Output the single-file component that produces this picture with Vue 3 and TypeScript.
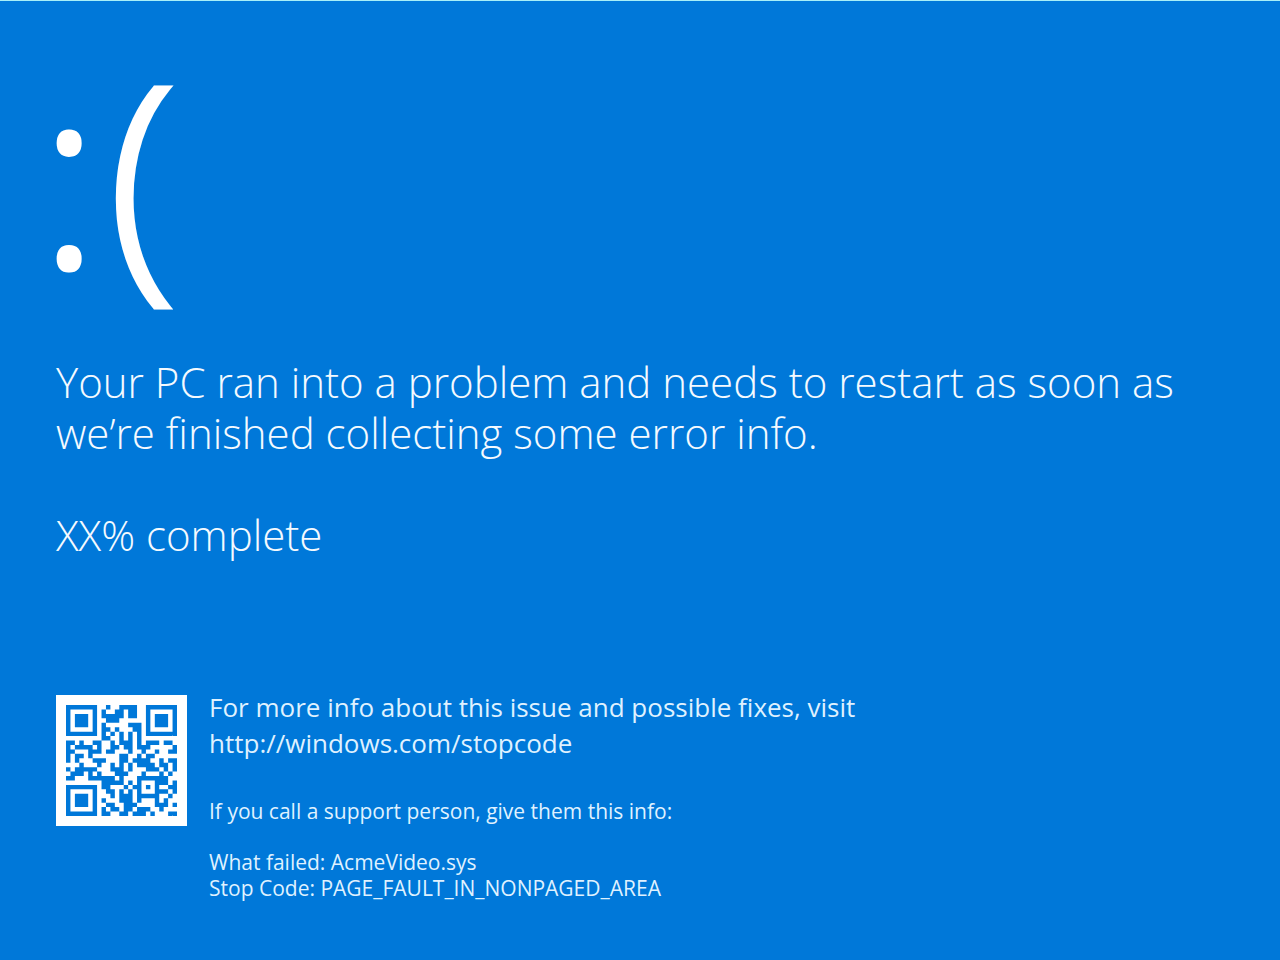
<script setup lang="ts">
const helpUrl = 'http://windows.com/stopcode'
const progress = 'XX'
const failure = {
  module: 'AcmeVideo.sys',
  stopCode: 'PAGE_FAULT_IN_NONPAGED_AREA',
}

/* QR code, version 2, error level L, mask 7 */
const SIZE = 25
const DATA_WORDS = 34
const EC_WORDS = 10
const FORMAT_BITS = '110100101110110'

function gfMultiply(a: number, b: number): number {
  let product = 0
  for (let i = 7; i >= 0; i--) {
    product = (product << 1) ^ ((product >>> 7) * 0x11d)
    product ^= ((b >>> i) & 1) * a
  }
  return product
}

function errorWords(data: number[]): number[] {
  const divisor: number[] = new Array(EC_WORDS).fill(0)
  divisor[EC_WORDS - 1] = 1
  let root = 1
  for (let i = 0; i < EC_WORDS; i++) {
    for (let j = 0; j < EC_WORDS; j++) {
      divisor[j] = gfMultiply(divisor[j], root)
      if (j + 1 < EC_WORDS) divisor[j] ^= divisor[j + 1]
    }
    root = gfMultiply(root, 2)
  }
  const rest: number[] = new Array(EC_WORDS).fill(0)
  for (const word of data) {
    const factor = word ^ rest.shift()!
    rest.push(0)
    divisor.forEach((d, i) => (rest[i] ^= gfMultiply(d, factor)))
  }
  return rest
}

function codewordBits(text: string): string {
  const byte = (n: number) => n.toString(2).padStart(8, '0')
  let bits = '0100' + byte(text.length)
  for (const ch of text) bits += byte(ch.charCodeAt(0))
  bits += '0000'
  const data = (bits.match(/.{8}/g) ?? []).map((b) => parseInt(b, 2))
  for (let pad = 0xec; data.length < DATA_WORDS; pad ^= 0xec ^ 0x11) data.push(pad)
  return [...data, ...errorWords(data)].map(byte).join('')
}

function qrMatrix(text: string): boolean[][] {
  const cells: (boolean | null)[][] = Array.from({ length: SIZE }, () => new Array(SIZE).fill(null))
  const set = (x: number, y: number, dark: boolean) => {
    if (x >= 0 && y >= 0 && x < SIZE && y < SIZE) cells[y][x] = dark
  }
  for (let i = 0; i < SIZE; i++) {
    set(6, i, i % 2 === 0)
    set(i, 6, i % 2 === 0)
  }
  for (const [cx, cy] of [[3, 3], [SIZE - 4, 3], [3, SIZE - 4]]) {
    for (let dy = -4; dy <= 4; dy++) {
      for (let dx = -4; dx <= 4; dx++) {
        const ring = Math.max(Math.abs(dx), Math.abs(dy))
        set(cx + dx, cy + dy, ring !== 2 && ring !== 4)
      }
    }
  }
  for (let dy = -2; dy <= 2; dy++) {
    for (let dx = -2; dx <= 2; dx++) {
      set(18 + dx, 18 + dy, Math.max(Math.abs(dx), Math.abs(dy)) !== 1)
    }
  }
  const format = [...FORMAT_BITS].map((b) => b === '1')
  const near = [0, 1, 2, 3, 4, 5, 7, 8]
  near.forEach((p, i) => {
    set(p, 8, format[i])
    set(8, p, format[14 - i])
    set(SIZE - 1 - i, 8, format[14 - i])
    if (i < 7) set(8, SIZE - 1 - i, format[i])
  })
  set(8, SIZE - 8, true)

  const bits = codewordBits(text)
  let index = 0
  for (let right = SIZE - 1; right >= 1; right -= 2) {
    if (right === 6) right = 5
    for (let step = 0; step < SIZE; step++) {
      const upward = ((right + 1) & 2) === 0
      const y = upward ? SIZE - 1 - step : step
      for (const x of [right, right - 1]) {
        if (cells[y][x] !== null) continue
        const flip = (((x + y) % 2) + ((x * y) % 3)) % 2 === 0
        cells[y][x] = (bits[index++] === '1') !== flip
      }
    }
  }
  return cells.map((row) => row.map(Boolean))
}

const qrPath = qrMatrix(helpUrl)
  .flatMap((row, y) => row.map((dark, x) => (dark ? `M${x} ${y}h1v1h-1z` : '')))
  .join('')
</script>

<template>
  <main class="screen">
    <div class="face" role="img" aria-label="Sad face"><span>:</span><span>(</span></div>
    <h1 class="message">
      Your PC ran into a problem and needs to restart as soon as we’re finished collecting some
      error info.
    </h1>
    <p class="progress">{{ progress }}% complete</p>
    <section class="support">
      <svg class="qr" viewBox="0 0 25 25" role="img" aria-label="QR code">
        <path :d="qrPath" />
      </svg>
      <div class="details">
        <p class="more">
          For more info about this issue and possible fixes, visit<br />
          <a :href="helpUrl">{{ helpUrl }}</a>
        </p>
        <p class="small">If you call a support person, give them this info:</p>
        <p class="small">
          What failed: {{ failure.module }}<br />
          Stop Code: {{ failure.stopCode }}
        </p>
      </div>
    </section>
  </main>
</template>

<style>
body {
  margin: 0;
  background: #0078d9;
}
</style>

<style scoped>
.screen {
  box-sizing: border-box;
  min-height: 100vh;
  padding: 41px 56px 56px;
  border-top: 1px solid #a8f0f8;
  background: #0078d9;
  color: #dff1ff;
  font-family: "Open Sans", "Noto Sans", sans-serif;
}

.face {
  display: flex;
  gap: 9px;
  margin-left: -17px;
  color: #fff;
  font-size: 252px;
  font-weight: 300;
  line-height: 256px;
  -webkit-text-stroke: 5px #fff;
}

.message,
.progress {
  margin: 0;
  color: #f4faff;
  font-size: 42px;
  font-weight: 300;
  line-height: 51px;
}

.message {
  margin-top: 58px;
}

.progress {
  margin-top: 51px;
}

.support {
  display: flex;
  align-items: flex-start;
  gap: 22px;
  margin-top: 129px;
}

.qr {
  box-sizing: border-box;
  flex: none;
  width: 131px;
  height: 131px;
  margin-top: 6px;
  padding: 10px;
  background: #fff;
  fill: #0078d9;
}

.details p {
  margin: 0;
}

.details .more {
  margin-bottom: 37px;
  font-size: 26px;
  line-height: 36px;
}

.details .small {
  margin-bottom: 25px;
  font-size: 21px;
  line-height: 26px;
}

.details .small:last-child {
  margin-bottom: 0;
}

a {
  color: inherit;
  text-decoration: none;
}
</style>
